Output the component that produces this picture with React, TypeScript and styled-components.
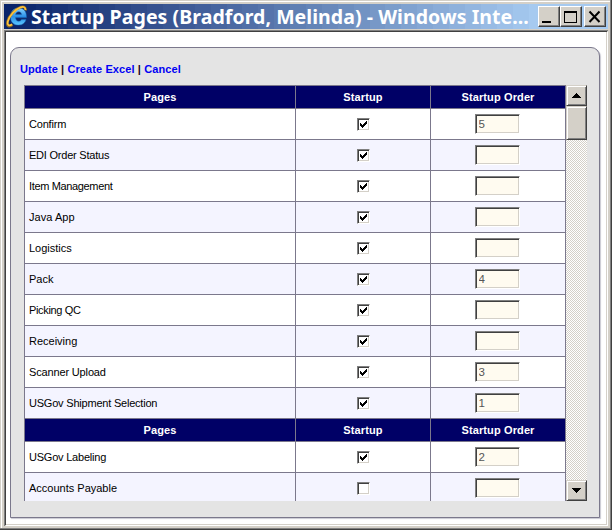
import React from "react";
import styled, { createGlobalStyle, css } from "styled-components";

const GlobalStyle = createGlobalStyle`
  *, *::before, *::after { box-sizing: border-box; }
  body { margin: 0; overflow: hidden; font-family: "Liberation Sans", Arial, sans-serif; }
`;

const raised = css`
  border: 1px solid;
  border-color: #d4d0c8 #404040 #404040 #d4d0c8;
  box-shadow: inset 1px 1px #fff, inset -1px -1px #808080;
  background: #d4d0c8;
`;

const STEPS = 38;
const bands = Array.from({ length: STEPS }, (_, i) => {
  const t = Math.min(1, i / (STEPS - 5));
  const mix = (a: number, b: number) => Math.round(a + (b - a) * t);
  return `rgb(${mix(10, 166)},${mix(36, 202)},${mix(106, 240)}) ${(i / STEPS) * 100}% ${((i + 1) / STEPS) * 100}%`;
}).join(",");

const Window = styled.div`
  width: 612px;
  height: 530px;
  display: flex;
  flex-direction: column;
  padding: 4px;
  background: #d4d0c8;
  box-shadow: inset -1px -1px #404040, inset -2px -2px #808080, inset 0 1px #d4d0c8,
    inset 1px 0 #d4d0c8, inset 2px 2px #fff;
`;

const TitleBar = styled.header`
  height: 25px;
  flex: none;
  display: flex;
  align-items: center;
  padding: 0 2px 0 2px;
  background: linear-gradient(to right, ${bands});
  > svg { flex: none; }
`;

const Title = styled.h1`
  margin: 0 0 0 4px;
  flex: 1;
  min-width: 0;
  font: bold 19.5px/25px "Noto Sans", Tahoma, sans-serif;
  letter-spacing: 0.06px;
  color: #fff;
  white-space: nowrap;
`;

const WindowButton = styled.button<{ $gap?: boolean }>`
  ${raised}
  border-color: #fff #404040 #404040 #fff;
  box-shadow: inset -1px -1px #808080;
  width: 22px;
  height: 21px;
  flex: none;
  padding: 0;
  margin-left: ${(p) => (p.$gap ? 2 : 0)}px;
  svg { display: block; }
`;

const Client = styled.main`
  flex: 1;
  min-height: 0;
  margin-top: 1px;
  border: solid;
  border-width: 2px 1px 1px 2px;
  border-color: #404040 #fff #fff #404040;
  background: #fff;
  box-shadow: inset -1px -1px #d4d0c8;
  padding: 15px 8px 7px 4px;
  position: relative;
  &::before {
    content: "";
    position: absolute;
    inset: -2px -1px -1px -2px;
    border-top: 1px solid #808080;
    border-left: 1px solid #808080;
  }
`;

const Panel = styled.section`
  height: 471px;
  width: 590px;
  border: 1px solid #7b788c;
  border-radius: 9px 9px 0 0;
  background: #e4e4e4;
  box-shadow: 1px 1px 1px #c9c9d2;
  padding: 0 12px 0 13px;
  overflow: hidden;
`;

const Links = styled.nav`
  height: 37px;
  margin-left: -4px;
  padding-top: 15px;
  font-size: 11px;
  line-height: 13px;
  font-weight: bold;
  letter-spacing: 0.1px;
  white-space: pre;
  color: #200020;
  a { color: #0000f4; text-decoration: none; }
`;

const ScrollArea = styled.div`
  display: flex;
  width: 563px;
  height: 416px;
  overflow: hidden;
`;

const Grid = styled.div`
  width: 542px;
  flex: none;
  border: solid #7b788c;
  border-width: 1px 1px 0 1px;
`;

const Row = styled.div<{ $tint?: boolean }>`
  display: grid;
  grid-template-columns: 271px 135px 134px;
  height: 31px;
  border-bottom: 1px solid #7b788c;
  background: ${(p) => (p.$tint ? "#f4f4ff" : "#fff")};
`;

const HeadRow = styled(Row)`
  height: 23px;
  background: #000066;
  color: #fff;
  font-size: 11px;
  font-weight: bold;
  letter-spacing: 0.12px;
`;

const Cell = styled.div`
  display: flex;
  align-items: center;
  justify-content: center;
  border-right: 1px solid #7b788c;
  &:last-child { border-right: 0; }
`;

const NameCell = styled(Cell)<{ $tracking: number }>`
  justify-content: flex-start;
  padding-left: 4px;
  font-size: 11px;
  letter-spacing: ${(p) => p.$tracking}px;
  color: #000;
`;

const sunken = css`
  border: 1px solid;
  border-color: #808080 #fff #fff #808080;
  box-shadow: inset 1px 1px #404040, inset -1px -1px #d4d0c8;
`;

const Check = styled.span`
  ${sunken}
  width: 13px;
  height: 13px;
  background: #fff;
  svg { display: block; margin: 2px; }
`;

const OrderInput = styled.input`
  ${sunken}
  width: 45px;
  height: 20px;
  margin: 0 2px 0 0;
  padding: 1px 2px 1px 3px;
  border-radius: 0;
  outline: 0;
  background: #fffbf0;
  color: #555;
  font: 11.5px "Liberation Sans", Arial, sans-serif;
`;

const ScrollBar = styled.div`
  width: 21px;
  display: flex;
  flex-direction: column;
  background: repeating-conic-gradient(#d4d0c8 0 25%, #fff 0 50%) 0 0 / 2px 2px;
`;

const ScrollPart = styled.div<{ $h: number }>`
  ${raised}
  height: ${(p) => p.$h}px;
  flex: none;
  svg { display: block; }
`;

const Track = styled.div`
  flex: 1;
`;

const Browser = () => (
  <svg width="21" height="23" viewBox="0 0 21 23" fill="none">
    <defs>
      <linearGradient id="blue" x1="0" y1="0" x2="0" y2="1">
        <stop stopColor="#8ad7ff" />
        <stop offset=".5" stopColor="#2b8fe8" />
        <stop offset="1" stopColor="#5cc8ff" />
      </linearGradient>
    </defs>
    <path
      d="M20.500 12.600H9.500c.2 2.500 1.400 3.600 3.300 3.600 1.300 0 2.200-.6 2.700-1.600h4.600c-1 3.500-3.500 5.500-7.400 5.500-5 0-8.200-2.900-8.200-8.200C4.500 6.300 7.800 3 12.700 3s8 3.300 7.800 9.600ZM9.600 9.600h6c-.2-1.900-1.300-2.900-2.900-2.900s-2.800 1-3.100 2.900Z"
      fill="url(#blue)"
      stroke="#1769b9"
      strokeWidth=".5"
    />
    <path d="M19.500 5.500c.5-3-1.500-4.500-5-3.200C9 4 3 10.500 1.500 16.500c-1 4.500 1.500 6 5 3.200" stroke="#8a6a28" strokeWidth="2.600" />
    <path d="M19.500 5C19.500 2 17.500 1.300 14.500 2.400 9 4.500 3.300 10.700 1.800 16.500c-.8 3.600 1 5 4.300 2.700" stroke="#fcc23c" strokeWidth="1.700" />
  </svg>
);

const Tick = () => (
  <svg width="7" height="7" viewBox="0 0 7 7" shapeRendering="crispEdges">
    <path d="M0 2h1v1h1v1h1V3h1V2h1V1h1V0h1v3H6v1H5v1H4v1H3v1H2V6H1V5H0z" />
  </svg>
);

const Arrow = ({ down }: { down?: boolean }) => (
  <svg width="19" height="19" viewBox="0 0 19 19" shapeRendering="crispEdges">
    <path d={down ? "M5 7h9v1h-1v1h-1v1h-1v1h-1v1H9v-1H8v-1H7V9H6V8H5z" : "M5 12h9v-1h-1v-1h-1V9h-1V8h-1V7H9v1H8v1H7v1H6v1H5z"} />
  </svg>
);

interface Item {
  name: string;
  on: boolean;
  order?: string;
  tracking?: number;
}

const firstGroup: Item[] = [
  { name: "Confirm", on: true, order: "5", tracking: -0.2 },
  { name: "EDI Order Status", on: true, tracking: -0.22 },
  { name: "Item Management", on: true, tracking: -0.35 },
  { name: "Java App", on: true, tracking: 0.05 },
  { name: "Logistics", on: true },
  { name: "Pack", on: true, order: "4" },
  { name: "Picking QC", on: true, tracking: -0.35 },
  { name: "Receiving", on: true },
  { name: "Scanner Upload", on: true, order: "3", tracking: -0.15 },
  { name: "USGov Shipment Selection", on: true, order: "1", tracking: -0.21 },
];

const secondGroup: Item[] = [
  { name: "USGov Labeling", on: true, order: "2", tracking: -0.22 },
  { name: "Accounts Payable", on: false },
];

const Group = ({ items }: { items: Item[] }) => (
  <>
    <HeadRow>
      <Cell>Pages</Cell>
      <Cell>Startup</Cell>
      <Cell>Startup Order</Cell>
    </HeadRow>
    {items.map(({ name, on, order = "", tracking = 0 }, i) => (
      <Row key={name} $tint={i % 2 === 1}>
        <NameCell $tracking={tracking}>{name}</NameCell>
        <Cell>
          <Check role="checkbox" aria-checked={on} aria-label={name}>{on && <Tick />}</Check>
        </Cell>
        <Cell>
          <OrderInput defaultValue={order} aria-label={`${name} order`} />
        </Cell>
      </Row>
    ))}
  </>
);

export default function App() {
  return (
    <Window>
      <GlobalStyle />
      <TitleBar>
        <Browser />
        <Title>Startup Pages (Bradford, Melinda) - Windows Inte...</Title>
        <WindowButton aria-label="Minimize">
          <svg width="20" height="19" shapeRendering="crispEdges"><path d="M3 14h9v2H3z" /></svg>
        </WindowButton>
        <WindowButton aria-label="Maximize">
          <svg width="20" height="19" shapeRendering="crispEdges"><path fillRule="evenodd" d="M3 4h13v12H3zM4 6v9h11V6z" /></svg>
        </WindowButton>
        <WindowButton $gap aria-label="Close">
          <svg width="20" height="19"><path d="M4.500 4.500l10 10.500M14.500 4.500l-10 10.500" stroke="#000" strokeWidth="2" /></svg>
        </WindowButton>
      </TitleBar>
      <Client>
        <Panel>
          <Links>
            <a>Update</a> | <a>Create Excel</a> | <a>Cancel</a>
          </Links>
          <ScrollArea>
            <Grid>
              <Group items={firstGroup} />
              <Group items={secondGroup} />
            </Grid>
            <ScrollBar>
              <ScrollPart $h={21}><Arrow /></ScrollPart>
              <ScrollPart $h={34} />
              <Track />
              <ScrollPart $h={21}><Arrow down /></ScrollPart>
            </ScrollBar>
          </ScrollArea>
        </Panel>
      </Client>
    </Window>
  );
}
